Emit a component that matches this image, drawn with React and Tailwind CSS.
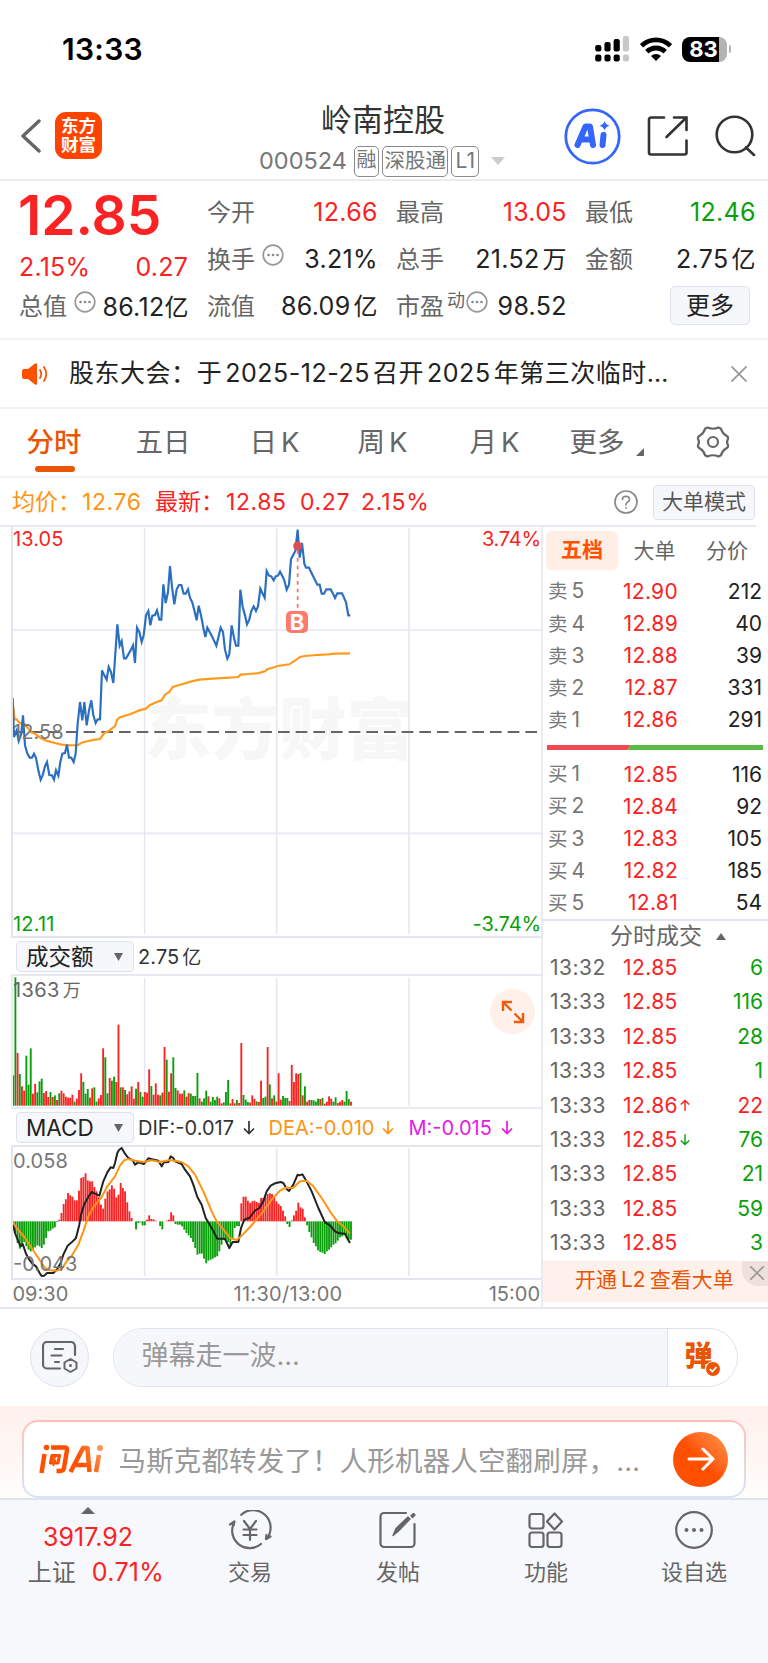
const RED = '#fa2222';
const GREEN = '#0a9f0a';

const sells = [
  ['卖5', '12.90', 212],
  ['卖4', '12.89', 40],
  ['卖3', '12.88', 39],
  ['卖2', '12.87', 331],
  ['卖1', '12.86', 291],
];

const buys = [
  ['买1', '12.85', 116],
  ['买2', '12.84', 92],
  ['买3', '12.83', 105],
  ['买4', '12.82', 185],
  ['买5', '12.81', 54],
];

const trades = [
  { time: '13:32', price: '12.85', volume: 6 },
  { time: '13:33', price: '12.85', volume: 116 },
  { time: '13:33', price: '12.85', volume: 28 },
  { time: '13:33', price: '12.85', volume: 1 },
  { time: '13:33', price: '12.86', volume: 22, dir: 'up' },
  { time: '13:33', price: '12.85', volume: 76, dir: 'down' },
  { time: '13:33', price: '12.85', volume: 21 },
  { time: '13:33', price: '12.85', volume: 59 },
  { time: '13:33', price: '12.85', volume: 3 },
];

// Chart coordinates are in thirds of a pixel
const priceLine =
  '38,533 42,650 50,630 56,662 64,640 69,585 75,675 82,700 89,712 96,712 102,700 108,713 115,750 122,778 128,765 135,738 141,725 148,764 156,765 162,778 168,750 175,766 181,725 187,700 195,698 201,673 207,712 214,712 221,725 227,700 233,610 240,545 247,600 253,545 260,615 267,570 274,540 280,585 287,608 293,597 300,597 306,450 313,465 320,478 326,440 333,455 340,488 346,400 352,312 359,376 365,362 372,414 378,414 385,402 392,390 399,375 405,428 411,322 418,335 425,365 431,345 438,285 445,272 451,315 457,286 465,284 471,270 478,298 484,298 490,192 497,248 504,215 510,137 516,200 523,252 530,207 537,194 544,194 551,220 557,220 564,207 570,232 577,247 583,270 590,300 596,256 603,285 610,322 616,350 622,322 629,335 636,348 642,361 649,376 656,348 662,322 669,335 675,388 682,415 688,402 695,315 702,352 708,376 715,376 721,208 728,260 735,285 741,312 748,297 754,272 761,258 768,272 774,258 781,205 787,218 794,232 800,152 807,166 814,168 821,180 827,168 834,166 840,154 847,167 853,180 860,208 867,193 873,117 880,103 886,92 893,28 899,112 906,68 913,130 918,142 927,142 932,153 952,193 959,193 965,220 972,220 979,207 992,207 999,220 1005,233 1012,219 1026,219 1032,232 1038,246 1045,285 1051,285';

const averageLine =
  '38,545 44,597 50,597 56,605 64,610 75,612 85,625 95,637 105,640 122,653 135,660 150,664 165,668 185,673 210,675 235,674 245,667 265,662 285,658 300,656 313,638 325,633 345,617 352,597 360,591 385,583 405,576 418,570 438,565 448,555 465,547 485,540 495,523 508,515 518,500 530,496 550,490 575,483 597,478 640,475 715,470 722,463 745,461 772,459 795,453 802,447 825,440 833,437 868,432 875,427 885,421 900,410 915,407 950,404 985,402 1005,400 1050,399';

const volumeTops = [
  467, 173, 400, 463, 500, 513, 408, 495, 386, 522, 493, 518, 485, 477, 520, 514, 532, 517, 532, 527,
  541, 521, 513, 521, 531, 534, 534, 525, 546, 537, 511, 461, 487, 522, 508, 534, 506, 503, 546, 536,
  526, 386, 413, 521, 475, 483, 471, 487, 315, 503, 503, 511, 524, 515, 500, 537, 507, 487, 517, 531,
  517, 519, 449, 499, 525, 491, 525, 527, 519, 382, 420, 516, 461, 413, 505, 512, 522, 522, 512, 531,
  520, 522, 529, 529, 460, 536, 546, 536, 513, 530, 546, 532, 541, 531, 536, 551, 548, 517, 481, 551,
  538, 551, 541, 550, 370, 526, 540, 547, 549, 527, 538, 545, 547, 483, 535, 531, 382, 494, 536, 527,
  546, 461, 540, 529, 535, 535, 544, 436, 487, 461, 463, 460, 527, 500, 546, 541, 541, 542, 546, 537,
  538, 535, 552, 546, 530, 537, 546, 533, 550, 546, 541, 546, 514, 538, 546,
];

const volumeColors =
  'rgrgrrgggr' + 'rgggrrrgrg' + 'rgrrrrrrgr' + 'rrgggrrggr' + 'rrggrggrrg' + 'rgrrrrgrgg' + 'rrrgrrrgrr' +
  'grrggrrrgr' + 'rggggrgggr' + 'ggggrrgggr' + 'rrgrrgggrr' + 'rgrrggrgrg' + 'rrrgggrrrr' + 'rgrgrrgggg' +
  'rgrrrrggrr' + 'rgggr';

const macdBars = [
  -10, -35, -65, -82, -75, -62, -75, -85, -90, -85, -78, -72, -75, -80, -70, -50, -30, -28, -22, -18,
  -2, 5, 25, 52, 66, 85, 78, 74, 63, 63, 92, 130, 133, 144, 123, 120, 120, 103, 90, 72,
  50, 38, 68, 90, 96, 108, 98, 72, 80, 115, 100, 90, 57, 30, 10, 0, -24, -5, -3, -12,
  -12, 5, 18, 7, 6, 2, 0, -14, -24, 0, 2, 5, 27, 18, -8, -10, -10, -15, -25, -35,
  -42, -50, -62, -80, -100, -97, -97, -112, -126, -118, -115, -112, -108, -105, -90, -70, -50, -55, -62, -70,
  -50, -20, -14, -15, 54, 74, 74, 62, 55, 60, 62, 58, 55, 70, 70, 72, 82, 84, 82, 73,
  60, 52, 46, 32, 15, -8, -17, 3, 18, 32, 56, 42, 38, 12, -12, -32, -48, -65, -75, -87,
  -92, -94, -98, -90, -85, -78, -70, -66, -58, -48, -45, -42, -50, -55, -55,
];

const difLine =
  '38,340 45,370 55,395 62,410 68,403 78,432 88,450 97,462 108,470 120,492 125,499 133,498 141,490 160,490 172,478 182,460 190,435 203,408 215,398 228,385 238,345 243,315 253,283 265,262 275,247 285,252 298,258 310,215 322,188 332,173 340,175 345,160 352,130 357,121 365,115 375,132 385,145 398,152 405,165 415,158 432,163 445,146 462,150 475,153 485,170 492,158 505,157 512,140 520,145 525,155 545,163 555,180 570,200 580,225 592,262 605,285 617,325 635,355 652,387 665,387 675,388 688,415 698,397 715,397 723,355 733,330 748,325 765,303 778,295 790,275 800,245 812,228 825,221 842,217 850,220 860,238 867,244 880,225 893,195 898,197 907,194 918,212 935,245 955,295 975,338 990,347 1005,365 1015,370 1035,372 1043,388 1050,400';

const deaLine =
  '38,337 50,355 75,385 105,430 135,475 150,482 170,483 185,478 200,455 215,438 235,405 250,365 265,320 280,292 305,262 322,230 345,200 360,168 372,152 385,148 405,153 430,157 455,152 480,157 510,151 545,157 565,170 585,195 610,245 635,305 650,335 675,365 690,385 710,391 725,378 750,352 790,305 815,270 840,243 858,234 880,234 900,215 920,213 940,230 965,265 990,305 1010,333 1030,350 1050,372';

function StatusBar() {
  return (
    <div className="h-[92px] flex items-center justify-between pl-[62px] pr-[37px] pt-[6px]">
      <span className="text-[30px] leading-none font-semibold tracking-[0.3px] text-black">13:33</span>
      <div className="flex items-center gap-2.5">
        <svg className="w-[35px] h-[26px]" viewBox="0 0 35 26">
          {[9, 6, 3, 0].map((y, i) => (
            <g key={i} fill={i === 3 ? '#c8c8c8' : '#000'}>
              <rect x={0.2 + i * 9.2} y={y} width="6.2" height={15 - y + 0.5} rx="2.2" />
              <rect x={0.2 + i * 9.2} y="18.5" width="6.2" height="7" rx="2.2" />
            </g>
          ))}
        </svg>
        <svg className="w-8 h-6" viewBox="0 0 32 24" fill="none" stroke="#000" strokeWidth="4.8">
          <path d="M1.5 8.800A20.5 20.5 0 0 1 30.5 8.800" />
          <path d="M6.8 14.800A13 13 0 0 1 25.2 14.800" />
          <path d="M11 19A7 7 0 0 1 21 19L16 24Z" fill="#000" stroke="none" />
        </svg>
        <div className="flex items-center gap-0.5">
          <div className="w-[45px] h-[25px] rounded-[8px] bg-[linear-gradient(90deg,#000_83%,#b3b3b3_83%)] text-white text-[22px] leading-[25px] font-bold text-center pr-px">
            83
          </div>
          <div className="w-[2.5px] h-2 rounded-r-full bg-[#b3b3b3]" />
        </div>
      </div>
    </div>
  );
}

function Header() {
  return (
    <div className="h-[89px] flex border-b-2 border-[#ececec] pl-[21px]">
      <svg className="w-5 h-[34px] mt-[27px]" viewBox="0 0 20 34" fill="none" stroke="#666" strokeWidth="3.4" strokeLinecap="round" strokeLinejoin="round">
        <path d="M18 2L2 17L18 32" />
      </svg>
      <div className="w-[47px] h-[47px] mt-5 ml-[14px] rounded-[11px] bg-[#ff4400] text-white font-bold text-[17.500px] leading-[19px] text-center pt-[4px]">
        东方
        <br />
        财富
      </div>
      <div className="w-[250px] ml-[156px] flex flex-col items-center">
        <h1 className="text-[31px] leading-[36px] mt-[9.500px] text-[#333] font-normal">岭南控股</h1>
        <div className="flex items-center gap-[3px] mt-[8px] -ml-0.5 text-[#777] whitespace-nowrap leading-none">
          <span className="text-[23.500px] mr-1">000524</span>
          <span className="h-[31px] px-[1.500px] border-[1.5px] border-[#8a8a8a] rounded-[5px] text-[20px] leading-[27px]">融</span>
          <span className="h-[31px] px-[1.5px] border-[1.5px] border-[#8a8a8a] rounded-[5px] text-[20.500px] leading-[27px]">深股通</span>
          <span className="h-[31px] px-[3px] border-[1.5px] border-[#8a8a8a] rounded-[5px] text-[21px] leading-[27px]">L1</span>
          <svg className="w-[14px] h-2 ml-[9px]" viewBox="0 0 14 8">
            <path d="M0 0h14L7 8z" fill="#ccc" />
          </svg>
        </div>
      </div>
      <svg className="w-[57px] h-[57px] mt-[15.5px] ml-[56px]" viewBox="0 0 57 57">
        <circle cx="28.5" cy="28.5" r="26.7" fill="none" stroke="#3465ff" strokeWidth="2.8" />
        <path d="M13.500 37L21.500 18.500H26L29 37M17 31.500H27" fill="none" stroke="#3465ff" strokeWidth="6" strokeLinejoin="round" strokeLinecap="round" />
        <path d="M39.500 27L38.500 37" stroke="#3465ff" strokeWidth="6" strokeLinecap="round" />
        <path d="M40.500 13q1 3.800 5 4.800-4 1-5 4.800-1-3.800-5-4.800 4-1 5-4.800z" fill="#3465ff" />
      </svg>
      <svg className="w-[42px] h-[42px] mt-[23px] ml-[26px]" viewBox="0 0 42 42" fill="none" stroke="#333" strokeWidth="2.6" strokeLinecap="round">
        <path d="M17 2.500H4a2 2 0 0 0-2 2V37.500a2 2 0 0 0 2 2H37.500a2 2 0 0 0 2-2V25.500" />
        <path d="M27 2.500H39.500V15M39.500 2.500L19.500 22" />
      </svg>
      <svg className="w-[42px] h-[42px] mt-[22px] ml-[26px] shrink-0" viewBox="0 0 42 42" fill="none" stroke="#333" strokeWidth="2.6" strokeLinecap="round">
        <circle cx="19.500" cy="20.500" r="17.800" />
        <path d="M31 33.500L39 41" />
      </svg>
    </div>
  );
}

function Dots() {
  return (
    <svg className="w-[22px] h-[22px] shrink-0" viewBox="0 0 22 22">
      <circle cx="11" cy="11" r="9.800" fill="none" stroke="#999" strokeWidth="1.7" />
      <g fill="#888">
        <circle cx="6.500" cy="11" r="1.300" />
        <circle cx="11" cy="11" r="1.300" />
        <circle cx="15.500" cy="11" r="1.300" />
      </g>
    </svg>
  );
}

function Stat({ label, value, unit, sup, dots, color = 'text-[#222]' }) {
  return (
    <div className="h-[47.2px] flex items-center justify-between whitespace-nowrap leading-none">
      <span className="text-[24px] text-[#666] flex items-center">
        {label}
        {sup && <span className="text-[18px] -mt-3 ml-[3px]">{sup}</span>}
        {dots && <span className={sup ? '-mt-2.5 ml-px' : '-mt-2.5 ml-[7px]'}><Dots /></span>}
      </span>
      <span className={`text-[25px] tracking-[0.3px] -mr-[0.8px] ${color}`}>
        {value}
        {unit && <span className={dots ? 'text-[24px]' : 'text-[24px] ml-[3px]'}>{unit}</span>}
      </span>
    </div>
  );
}

function Quote() {
  return (
    <div className="h-[159px] flex border-b-2 border-[#f3f3f3] pl-[19px] pr-[13px] pt-[8px]">
      <div className="w-[169px]">
        <div className="text-[55px] leading-none font-semibold text-[#fa2222] h-[60px] -mt-[1.500px] -ml-px">12.85</div>
        <div className="h-[36px] flex items-end justify-between text-[25px] leading-none text-[#fa2222] pb-[3.500px]">
          <span className="tracking-[0.2px]">2.15%</span>
          <span className="tracking-[0.2px]">0.27</span>
        </div>
        <Stat label="总值" value="86.12" unit="亿" dots />
      </div>
      <div className="w-[170px] ml-[19px]">
        <Stat label="今开" value="12.66" color="text-[#fa2222]" />
        <Stat label="换手" value="3.21%" dots />
        <Stat label="流值" value="86.09" unit="亿" />
      </div>
      <div className="w-[170px] ml-[19px]">
        <Stat label="最高" value="13.05" color="text-[#fa2222]" />
        <Stat label="总手" value="21.52" unit="万" />
        <Stat label="市盈" value="98.52" sup="动" dots />
      </div>
      <div className="w-[170px] ml-[19px]">
        <Stat label="最低" value="12.46" color="text-[#0a9f0a]" />
        <Stat label="金额" value="2.75" unit="亿" />
        <button className="block ml-auto mr-[5px] mt-[2.500px] w-[80px] h-[39px] rounded-[5px] border-[1.5px] border-[#dfe2ea] bg-[#f6f7fa] text-[24px] leading-[37px] text-[#222]">
          更多
        </button>
      </div>
    </div>
  );
}

function Notice() {
  return (
    <div className="h-[69px] flex items-center border-b-2 border-[#f3f3f3] pl-[22px] pr-[21px]">
      <svg className="w-[26px] h-[22px]" viewBox="0 0 26 22">
        <path d="M0 8q0-2 2-2h4l7-5.500q2-1 2 1v19q0 2-2 1L6 16H2q-2 0-2-2z" fill="#ff5000" />
        <path d="M18 7q2.500 4 0 8M22 4q4.500 7 0 14" fill="none" stroke="#ff5000" strokeWidth="1.800" strokeLinecap="round" />
      </svg>
      <p className="ml-[21px] text-[25px] leading-none text-[#222] whitespace-nowrap tracking-[0.53px]">
        股东大会：于<span className="mx-[3px]">2025-12-25</span>召开<span className="mx-[3px]">2025</span>年第三次临时…
      </p>
      <svg className="w-4 h-4 ml-auto" viewBox="0 0 16 16" stroke="#999" strokeWidth="1.8">
        <path d="M0.500 0.500l15 15M15.500 0.500l-15 15" />
      </svg>
    </div>
  );
}

function PeriodTabs() {
  return (
    <div className="h-[68.5px] flex border-b-2 border-[#f3f3f3] pl-[26.500px] text-[27.5px] leading-[67px] text-[#666] whitespace-nowrap">
      <div className="relative w-[109px] font-medium text-[#ea5504]">
        分时
        <div className="absolute left-2 bottom-[4px] w-10 h-[6px] rounded-full bg-[#ea5504]" />
      </div>
      <div className="w-[114px]">五日</div>
      <div className="w-[108px]">日<span className="ml-[4px]">K</span></div>
      <div className="w-[112px]">周<span className="ml-[4px]">K</span></div>
      <div className="w-[100px]">月<span className="ml-[4px]">K</span></div>
      <div className="w-[126px] flex items-center">
        更多
        <svg className="w-2 h-2 ml-[11px] mt-5" viewBox="0 0 8 8">
          <path d="M8 0v8H0z" fill="#666" />
        </svg>
      </div>
      <svg className="w-[34px] h-[34px] mt-[16px]" viewBox="0 0 34 34" fill="none" stroke="#666" strokeWidth="2.2" strokeLinejoin="round">
        <path d="M11.500 2.500Q17 5 22.500 2.500L25 3.800Q26 8 30 10.500Q32.500 11.500 32 14Q30 17 32 20Q32.500 22.500 30 23.500Q26 26 25 30.200L22.500 31.500Q17 29 11.500 31.500L9 30.200Q8 26 4 23.500Q1.500 22.500 2 20Q4 17 2 14Q1.500 11.500 4 10.500Q8 8 9 3.800Z" />
        <circle cx="17" cy="17" r="5" />
      </svg>
    </div>
  );
}

function InfoRow() {
  return (
    <div className="h-[49px] flex items-center pl-3 pr-[12px] pt-0.5 text-[23px] leading-none whitespace-nowrap border-b-2 border-[#e6e9ef] mr-3">
      <span className="text-[#ff9410] w-[70px]">均价：</span>
      <span className="text-[#ff9410] w-[73px] tracking-[0.6px]">12.76</span>
      <span className="text-[#fa2222] w-[71px]">最新：</span>
      <span className="text-[#fa2222] w-[74px] tracking-[0.6px]">12.85</span>
      <span className="text-[#fa2222] w-[61px] tracking-[0.6px]">0.27</span>
      <span className="text-[#fa2222] tracking-[0.8px]">2.15%</span>
      <svg className="w-6 h-6 ml-auto" viewBox="0 0 24 24" fill="none" stroke="#888" strokeWidth="1.7" strokeLinecap="round">
        <circle cx="12" cy="12" r="11" />
        <path d="M8.500 9.500Q8.500 6.300 12 6.300T15.500 9.500Q15.500 11.200 13.500 12.300T12 15M12 17.800v.2" />
      </svg>
      <button className="ml-[15px] -mr-[11px] w-[102px] h-[35px] rounded-[4px] border-[1.5px] border-[#dfe2ea] bg-[#f6f7fa] text-[21px] leading-[32px] text-[#555]">
        大单模式
      </button>
    </div>
  );
}

function PriceChart() {
  return (
    <div className="relative shrink-0 h-[411.500px] border-l-2 border-b-2 border-[#e2e5ee]">
      <div className="absolute left-[131px] top-[168px] text-[67.500px] leading-[70px] font-black text-[#f7f7f7]">东方财富</div>
      <svg className="absolute inset-0 w-[528px] h-[409px]" viewBox="39 20 1584 1227" fill="none">
        <path d="M434 24V1242M830 24V1242M1227 24V1242M39 329H1623M39 939H1623" stroke="#e6e9f1" strokeWidth="5" />
        <path d="M39 635H1623" stroke="#666" strokeWidth="6.500" strokeDasharray="35 18" />
        <polyline points={averageLine} stroke="#ff9a1a" strokeWidth="6.500" />
        <polyline points={priceLine} stroke="#2a6fc0" strokeWidth="6.500" />
        <path d="M893 90V270" stroke="#ff7566" strokeWidth="5.500" strokeDasharray="11 12" />
        <circle cx="893" cy="77" r="13.500" fill="#d9504f" />
      </svg>
      <span className="absolute left-0 top-[2.500px] text-[20px] leading-none tracking-[0.1px] text-[#fa2222]">13.05</span>
      <span className="absolute right-0 top-[2.500px] text-[20px] leading-none tracking-[-0.2px] text-[#fa2222]">3.74%</span>
      <span className="absolute left-0 top-[195px] text-[20px] leading-none tracking-[0.1px] text-[#777]">12.58</span>
      <span className="absolute left-0 bottom-[2px] text-[20px] leading-none tracking-[0.2px] text-[#0a9f0a]">12.11</span>
      <span className="absolute right-0 bottom-[2px] text-[20px] leading-none tracking-[-0.1px] text-[#0a9f0a]">-3.74%</span>
      <span className="absolute left-[273px] top-[84px] w-[22px] h-[22px] rounded-[5px] bg-[#ff7a6b] text-white text-[22px] leading-[22px] font-bold text-center">B</span>
    </div>
  );
}

function IndicatorButton({ children }) {
  return (
    <button className="w-[118px] h-[31px] shrink-0 rounded-[4px] border-[1.5px] border-[#dfe2ea] bg-[#f6f7fa] flex items-center justify-between pl-[9px] pr-[10px] text-[22.5px] leading-none text-[#222]">
      {children}
      <svg className="w-[9px] h-2" viewBox="0 0 9 8">
        <path d="M0 0h9L4.500 8z" fill="#666" />
      </svg>
    </button>
  );
}

function VolumeChart() {
  return (
    <div className="relative shrink-0 h-[132.500px] border-l-2 border-b-2 border-[#e9ecf2]">
      <svg className="absolute inset-0 w-[528px] h-[130px]" viewBox="39 169 1584 390">
        <path d="M434 174V558M830 174V558M1227 174V558" stroke="#e6e9f1" strokeWidth="5" />
        {volumeTops.map((top, i) => (
          <rect
            key={i}
            x={36.8 + i * 6.58}
            y={top}
            width="5.600"
            height={558 - top}
            fill={volumeColors[i] === 'r' ? RED : GREEN}
          />
        ))}
      </svg>
      <span className="absolute left-0 top-[4px] text-[20px] leading-none tracking-[0.4px] text-[#666]">
        1363<span className="ml-[3px] text-[18px]">万</span>
      </span>
      <div className="absolute right-[6px] top-[13px] w-[45px] h-[45px] rounded-full bg-[#fff1ea] flex items-center justify-center">
        <svg className="w-6 h-6" viewBox="0 0 24 24" fill="none" stroke="#ee5c10" strokeWidth="2.4">
          <path d="M2 11V2H11M2 2L10.500 10.500M22 13V22H13M22 22L13.500 13.500" />
        </svg>
      </div>
    </div>
  );
}

function MacdChart() {
  return (
    <div className="relative shrink-0 h-[133px] border-l-2 border-b-2 border-[#e2e5ee]">
      <svg className="absolute inset-0 w-[528px] h-[131px]" viewBox="39 112 1584 393" fill="none">
        <path d="M434 116V500M830 116V500M1227 116V500" stroke="#e6e9f1" strokeWidth="5" />
        {macdBars.map((v, i) => (
          <rect
            key={i}
            x={36.8 + i * 6.58}
            y={v > 0 ? 335 - v : 335}
            width="5.600"
            height={Math.abs(v)}
            fill={v > 0 ? RED : GREEN}
          />
        ))}
        <polyline points={difLine} stroke="#222" strokeWidth="6" strokeLinejoin="round" />
        <polyline points={deaLine} stroke="#ff9410" strokeWidth="6" strokeLinejoin="round" />
      </svg>
      <span className="absolute left-0 top-[4px] text-[20px] leading-none tracking-[0.1px] text-[#777]">0.058</span>
      <span className="absolute left-0 bottom-[4.500px] text-[20px] leading-none text-[#777]">-0.043</span>
    </div>
  );
}

function Arrow({ up, className }) {
  return (
    <svg className={className} viewBox="0 0 12 14" fill="none" stroke="currentColor" strokeWidth="1.7">
      <path d={up ? 'M6 14V1.500M1 6.500L6 1.500l5 5' : 'M6 0v12.500M1 7.500l5 5 5-5'} />
    </svg>
  );
}

function Charts() {
  return (
    <div className="w-[532px] ml-[11px] flex flex-col border-r-2 border-[#e9ebf1]">
      <PriceChart />
      <div className="h-[38.300px] shrink-0 flex items-center border-b-2 border-[#e6e9ef] pl-[5px] pt-[1.500px]">
        <IndicatorButton>成交额</IndicatorButton>
        <span className="ml-[4px] text-[20px] leading-none tracking-[0.1px] text-[#333]">
          2.75<span className="ml-[3px] text-[19px]">亿</span>
        </span>
      </div>
      <VolumeChart />
      <div className="h-[38.500px] shrink-0 flex items-center border-b-2 border-[#e2e5ee] pl-[5px] pt-[1.500px] text-[20px] leading-none whitespace-nowrap">
        <IndicatorButton>MACD</IndicatorButton>
        <span className="flex items-center ml-[4px] w-[130.500px] text-[#333]">DIF:-0.017<Arrow className="w-3 h-3.5 ml-[9px]" /></span>
        <span className="flex items-center w-[140px] text-[#ff9410]">DEA:-0.010<Arrow className="w-3 h-3.5 ml-[8px]" /></span>
        <span className="flex items-center text-[#e518e5]">M:-0.015<Arrow className="w-3 h-3.5 ml-[9px]" /></span>
      </div>
      <MacdChart />
      <div className="h-[28px] shrink-0 flex items-center pl-[1.500px] text-[20px] leading-none text-[#777]">
        <span className="w-[221px]">09:30</span>
        <span className="tracking-[0.3px]">11:30/13:00</span>
        <span className="ml-auto mr-px">15:00</span>
      </div>
    </div>
  );
}

function BookRow({ row }) {
  const [label, price, volume] = row;
  return (
    <div className="h-[32.2px] flex items-center text-[21px] leading-none">
      <span className="w-[50px] text-[#777] text-[19.500px]">
        {label[0]}
        <span className="ml-[4px] text-[21px]">{label[1]}</span>
      </span>
      <span className="w-[80px] text-right text-[#fa2222] tracking-[0.3px]">{price}</span>
      <span className="ml-auto text-[#222]">{volume}</span>
    </div>
  );
}

function OrderBook() {
  return (
    <div className="flex-1 flex flex-col">
      <div className="h-[48px] shrink-0 flex items-center pl-[3px] pr-[5px] text-[21px] leading-none text-[#666]">
        <div className="w-[72px] h-[39px] rounded-[6px] bg-[#ffeee6] text-[#ff5000] font-bold leading-[37px] text-center">五档</div>
        <div className="w-[73px] text-center">大单</div>
        <div className="w-[72px] text-center">分价</div>
      </div>
      <div className="pl-[5px] pr-[6px] pt-[0.500px]">
        {sells.map((row) => <BookRow key={row[0]} row={row} />)}
      </div>
      <svg className="w-[216px] h-[5px] shrink-0 ml-1 mt-[9.500px] mb-[7.500px]" viewBox="0 0 216 5">
        <path d="M0 0h84l-4 5H0z" fill="#ee4a4f" />
        <path d="M84 0h132v5H80z" fill="#5bb946" />
      </svg>
      <div className="pl-[5px] pr-[6px]">
        {buys.map((row) => <BookRow key={row[0]} row={row} />)}
      </div>
      <div className="h-[31.500px] shrink-0 border-t-2 border-[#e2e5ee] flex items-center pl-[67px] pt-px text-[23px] leading-none text-[#666]">
        分时成交
        <svg className="w-[10px] h-[7px] ml-[14px]" viewBox="0 0 10 7">
          <path d="M0 7h10L5 0z" fill="#666" />
        </svg>
      </div>
      <div className="pl-[7px] pr-[5px]">
        {trades.map(({ time, price, volume, dir }, i) => (
          <div key={i} className="h-[34.4px] flex items-center text-[21px] leading-none">
            <span className="w-[73px] text-[#666] tracking-[0.5px]">{time}</span>
            <span className="text-[#fa2222] tracking-[0.4px]">{price}</span>
            {dir && (
              <Arrow
                up={dir === 'up'}
                className={dir === 'up' ? 'w-[10px] h-3 ml-0.5 text-[#fa2222]' : 'w-[10px] h-3 ml-0.5 text-[#0a9f0a]'}
              />
            )}
            <span className={dir === 'up' ? 'ml-auto text-[#fa2222]' : 'ml-auto text-[#0a9f0a]'}>{volume}</span>
          </div>
        ))}
      </div>
      <div className="relative shrink-0 h-[41px] mt-px bg-[#fef0ea] text-[#ea5504] text-[21px] leading-[37px] pl-[32px] whitespace-nowrap">
        开通<span className="mx-1">L2</span>查看大单
        <div className="absolute right-0 top-0 w-[26px] h-[25px] rounded-bl-[16px] bg-[#eee1dc] flex items-center justify-center">
          <svg className="w-[14px] h-[14px] ml-1" viewBox="0 0 14 14" stroke="#999" strokeWidth="1.6">
            <path d="M0 0l14 14M14 0L0 14" />
          </svg>
        </div>
      </div>
    </div>
  );
}

function CommentBar() {
  return (
    <div className="h-[99px] flex items-center pl-[30px] border-t-2 border-[#e6e8ed]">
      <div className="w-[59px] h-[59px] rounded-full border-[1.5px] border-[#dfe2ea] bg-[#f6f7fa] flex items-center justify-center">
        <svg className="w-9 h-8" viewBox="0 0 36 32" fill="none" stroke="#666" strokeWidth="2.2" strokeLinecap="round">
          <path d="M33 14V5a4 4 0 0 0-4-4H5a4 4 0 0 0-4 4V23.500a4 4 0 0 0 4 4H18M13 8h8M9.500 14.500h10M13 21h4" />
          <path d="M28.500 18l6 3.500v6l-6 3.500-6-3.500v-6z" strokeWidth="2" strokeLinejoin="round" />
          <circle cx="28.500" cy="24.500" r="1.500" fill="#666" stroke="none" />
        </svg>
      </div>
      <div className="ml-[23.500px] w-[625px] h-[59px] rounded-full border-[1.5px] border-[#dfe2ea] flex overflow-hidden">
        <div className="flex-1 bg-[#f6f7fa] border-r-[1.5px] border-[#dfe2ea] pl-[28px] text-[27px] leading-[53px] text-[#999]">
          弹幕走一波...
        </div>
        <div className="relative w-[69px] pl-[17px] text-[28px] leading-[54px] font-black text-[#ea5504]">
          弹
          <svg className="absolute left-[37px] top-[32px] w-4 h-4" viewBox="0 0 16 16">
            <circle cx="8" cy="8" r="7.500" fill="#ea5504" stroke="#fff" />
            <path d="M4.800 8l2.500 2.500L11.500 6" fill="none" stroke="#fff" strokeWidth="1.700" />
          </svg>
        </div>
      </div>
    </div>
  );
}

function AskBanner() {
  return (
    <div className="h-[92.500px] bg-linear-to-b from-[#fff0eb] to-[#fffdfb] px-[22px] pt-[14px]">
      <div className="h-[78.500px] rounded-[16px] p-[2px] bg-linear-to-b from-[#ffbfb4] to-[#dbe3f7]">
        <div className="h-full rounded-[14px] bg-white flex items-center pl-[15px] pr-[16px] pt-px">
          <svg className="w-[64px] h-[30px]" viewBox="0 0 64 30" fill="none" stroke="url(#ask)" strokeWidth="4.500" strokeLinejoin="round">
            <defs>
              <linearGradient id="ask" gradientUnits="userSpaceOnUse" x1="10" y1="28" x2="64" y2="2">
                <stop offset="0.550" stopColor="#ff4f00" />
                <stop offset="1" stopColor="#ff9a5c" />
              </linearGradient>
            </defs>
            <path d="M5.500 10L2.500 29M12 3.500H26Q28.500 3.500 28 6L25 24Q24.500 27 21 27H17.500" />
            <circle cx="7.500" cy="3.500" r="2.800" fill="#ff4f00" stroke="none" />
            <path d="M13 11.500H20.500L19 19H11.500Z" strokeWidth="3.200" />
            <path d="M17 12L13.500 16.500H16.500L14 22" strokeWidth="1.800" />
            <path d="M31.500 28L44 4H48.500L50.500 28M37 21H49" />
            <path d="M60 11L57 28" />
            <circle cx="61" cy="4" r="3" fill="#ff9456" stroke="none" />
          </svg>
          <span className="ml-[15.500px] pt-[4px] text-[27.500px] leading-none tracking-[0.15px] text-[#999] whitespace-nowrap">
            马斯克都转发了！人形机器人空翻刷屏，…
          </span>
          <div className="ml-auto w-[55px] h-[55px] rounded-full bg-linear-to-tr from-[#ff5000] from-50% to-[#ff9747] flex items-center justify-center">
            <svg className="w-7 h-6" viewBox="0 0 28 24" fill="none" stroke="#fff" strokeWidth="3" strokeLinecap="round" strokeLinejoin="round">
              <path d="M2 12h24M16 2l10 10-10 10" />
            </svg>
          </div>
        </div>
      </div>
    </div>
  );
}

function NavItem({ label, children }) {
  return (
    <div className="w-[148px] flex flex-col items-center">
      <svg className="w-11 h-10 mt-[9.500px]" viewBox="0 0 44 40" fill="none" stroke="#666" strokeWidth="2.2" strokeLinecap="round" strokeLinejoin="round">
        {children}
      </svg>
      <span className="mt-[11px] text-[22px] leading-none text-[#666]">{label}</span>
    </div>
  );
}

function BottomNav() {
  return (
    <div className="h-[164.500px] bg-[#f7f8fb] border-t-2 border-[#dfe3ea] flex">
      <div className="w-[176px] flex flex-col items-center leading-none">
        <svg className="w-[14px] h-[7px] mt-[7px]" viewBox="0 0 14 7">
          <path d="M0 7h14L7 0z" fill="#666" />
        </svg>
        <span className="text-[25px] mt-[11px] text-[#fa2222]">3917.92</span>
        <div className="flex items-center mt-[10px] text-[24px] text-[#666] gap-[16px] pl-[16px]">
          上证<span className="text-[25px] tracking-[0.3px] text-[#fa2222]">0.71%</span>
        </div>
      </div>
      <NavItem label="交易">
        <path d="M13.200 4.800A17.500 17.500 0 0 1 38.400 29M5.500 14A17.500 17.500 0 0 0 33 34" />
        <path d="M2 14.500L6.500 11.500L5.500 15.500M38.400 25L38 29L42.500 26.500" />
        <path d="M16 11l6 8 6-8M22 19V30M15.500 19.500H28.500M15.500 25H28.500" />
      </NavItem>
      <NavItem label="发帖">
        <path d="M30 3H8a3.500 3.500 0 0 0-3.500 3.500V33.500A3.500 3.500 0 0 0 8 37H35a3.500 3.500 0 0 0 3.500-3.500V14" />
        <path d="M17 25.500l3-7L32 7l2 2L22 21.500zM35 5.500l2.500-2 1.500 1.500-2.500 2.500z" fill="#666" strokeWidth="1.4" />
      </NavItem>
      <NavItem label="功能">
        <rect x="5.500" y="4" width="14" height="14.500" rx="2.500" />
        <rect x="5.500" y="22.500" width="14" height="14.500" rx="2.500" />
        <rect x="23.500" y="22.500" width="14" height="14.500" rx="2.500" />
        <path d="M30.500 3.500l7.500 8-7.500 8-7.500-8z" />
      </NavItem>
      <NavItem label="设自选">
        <circle cx="22" cy="20" r="17.800" />
        <g fill="#666" stroke="none">
          <circle cx="14.500" cy="20" r="2" />
          <circle cx="22" cy="20" r="2" />
          <circle cx="29.500" cy="20" r="2" />
        </g>
      </NavItem>
    </div>
  );
}

export default function App() {
  return (
    <div className="w-[768px] h-[1663px] overflow-hidden bg-white flex flex-col font-['Inter','Noto_Sans_CJK_SC',sans-serif]">
      <StatusBar />
      <Header />
      <Quote />
      <Notice />
      <PeriodTabs />
      <InfoRow />
      <div className="flex h-[780px]">
        <Charts />
        <OrderBook />
      </div>
      <CommentBar />
      <AskBanner />
      <BottomNav />
    </div>
  );
}
